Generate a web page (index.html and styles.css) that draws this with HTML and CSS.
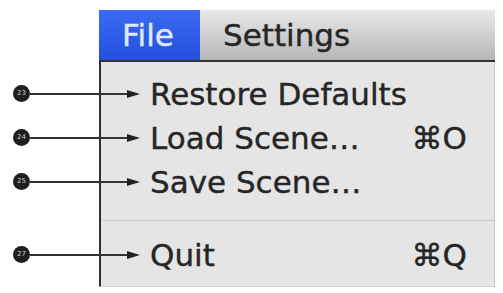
FILE: index.html
```html
<!DOCTYPE html>
<html>
<head>
<meta charset="utf-8">
<link rel="stylesheet" href="styles.css">
</head>
<body>
<div class="scene">
  <div class="menubar">
    <span class="menu active">File</span>
    <span class="menu">Settings</span>
  </div>
  <div class="dropdown">
    <div class="item">
      <span class="callout"><span class="num">23</span><span class="lead"></span><span class="head"></span></span>
      <span class="label">Restore Defaults</span>
    </div>
    <div class="item">
      <span class="callout"><span class="num">24</span><span class="lead"></span><span class="head"></span></span>
      <span class="label">Load Scene…</span>
      <span class="key">⌘O</span>
    </div>
    <div class="item">
      <span class="callout"><span class="num">25</span><span class="lead"></span><span class="head"></span></span>
      <span class="label">Save Scene…</span>
    </div>
    <div class="sep"></div>
    <div class="item">
      <span class="callout"><span class="num">27</span><span class="lead"></span><span class="head"></span></span>
      <span class="label">Quit</span>
      <span class="key">⌘Q</span>
    </div>
  </div>
</div>
</body>
</html>
```
FILE: styles.css
```css
html, body {
  margin: 0;
  padding: 0;
  background: #ffffff;
}
body {
  font-family: "DejaVu Sans", sans-serif;
  color: #262626;
}
.scene {
  padding: 10px 0 0 99px;
  width: 396px;
}
.menubar {
  display: flex;
  height: 50px;
  background: linear-gradient(#e9e9e9, #b6b6b6);
  border-bottom: 2px solid #333333;
  font-size: 31px;
  line-height: 50px;
}
.menu {
  padding: 0 22px 0 23px;
  color: #262626;
  -webkit-text-stroke: 0.4px currentColor;
}
.menu.active {
  width: 55px;
  background: linear-gradient(#3d6af2, #2350dc);
  color: #dfe8ff;
  padding-right: 23px;
}
.dropdown {
  background: #e5e5e5;
  border-left: 2px solid #2e2e2e;
  border-right: 1px solid #c2c2c2;
  border-bottom: 1px solid #cfcfcf;
  padding: 10px 27px 9px 49px;
  font-size: 31px;
  line-height: 44px;
}
.item {
  position: relative;
  display: flex;
  justify-content: space-between;
  height: 44px;
}
.label, .key {
  -webkit-text-stroke: 0.4px currentColor;
}
.callout {
  position: absolute;
  left: -137px;
  top: 13px;
  width: 127px;
  height: 17px;
  display: flex;
  align-items: center;
}
.num {
  width: 17px;
  height: 17px;
  border-radius: 50%;
  background: #1e1e1e;
  color: #d0d0d0;
  font-size: 7px;
  line-height: 17px;
  text-align: center;
  flex: none;
}
.lead {
  flex: 1;
  height: 2px;
  background: #333333;
}
.head {
  flex: none;
  width: 0;
  height: 0;
  border-top: 4px solid transparent;
  border-bottom: 4px solid transparent;
  border-left: 13px solid #222222;
}
.sep {
  height: 1px;
  background: #c9c9c9;
  margin: 16px -27px 12px -49px;
}
```
